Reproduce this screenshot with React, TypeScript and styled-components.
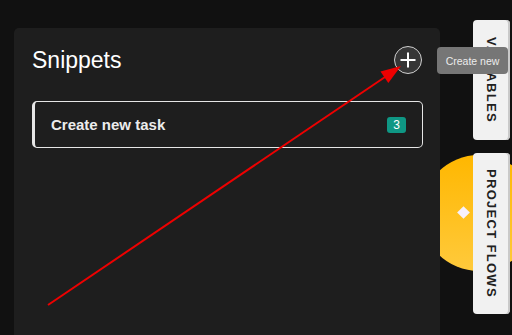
import styled, { createGlobalStyle } from "styled-components"

const GlobalStyle = createGlobalStyle`
  html, body {
    margin: 0;
    padding: 0;
    background: #111111;
    font-family: "Liberation Sans", Arial, sans-serif;
  }
`

const Page = styled.div`
  position: relative;
  width: 512px;
  height: 335px;
  overflow: hidden;
  display: flex;
  align-items: flex-start;
`

const Panel = styled.section`
  position: relative;
  z-index: 2;
  margin: 28px 0 0 14px;
  width: 426px;
  height: 330px;
  box-sizing: border-box;
  padding: 18px 18px 0 18px;
  background: #1e1e1e;
  border-radius: 5px;
  display: flex;
  flex-direction: column;
  gap: 27px;
`

const Header = styled.header`
  display: flex;
  align-items: center;
  justify-content: space-between;
  height: 28px;
`

const Title = styled.h1`
  margin: 0;
  font-size: 23px;
  font-weight: 400;
  color: #ffffff;
`

const AddButton = styled.button`
  width: 28px;
  height: 28px;
  padding: 0;
  border-radius: 50%;
  border: 1px solid #cfcfcf;
  background: #363636;
  display: flex;
  align-items: center;
  justify-content: center;
  cursor: pointer;
`

const SnippetCard = styled.div`
  height: 47px;
  box-sizing: border-box;
  margin-right: -1px;
  padding: 0 16px 0 16px;
  border: 1px solid #e6e6e6;
  border-left: 3px solid #e6e6e6;
  border-radius: 5px;
  display: flex;
  align-items: center;
  justify-content: space-between;
`

const CardLabel = styled.span`
  font-size: 15px;
  font-weight: 700;
  color: #ececec;
`

const Badge = styled.span`
  min-width: 19px;
  height: 16px;
  box-sizing: border-box;
  padding: 0 4px;
  border-radius: 3px;
  background: #0f9784;
  color: #ffffff;
  font-size: 12px;
  line-height: 16px;
  text-align: center;
`

const SideRail = styled.aside`
  position: relative;
  z-index: 2;
  margin: 20px 0 0 33px;
  display: flex;
  flex-direction: column;
  gap: 13px;
`

const Tab = styled.div<{ $h: number }>`
  width: 37px;
  height: ${(p) => p.$h}px;
  box-sizing: border-box;
  background: #f1f1f1;
  border-radius: 4px;
  box-shadow: inset -2px 0 0 #c9c9c9;
  display: flex;
  align-items: center;
  justify-content: center;
  writing-mode: vertical-rl;
  font-size: 13px;
  font-weight: 700;
  letter-spacing: 1.3px;
  color: #202020;
`

// yellow launcher blob, half hidden behind the panel
const Orb = styled.div`
  position: absolute;
  z-index: 1;
  left: 421px;
  top: 155px;
  width: 116px;
  height: 116px;
  border-radius: 50%;
  background: linear-gradient(180deg, #ffb700 0%, #ffca3c 100%);
`

const Diamond = styled.div`
  position: absolute;
  left: 38px;
  top: 53px;
  width: 9px;
  height: 9px;
  background: #f7f0fb;
  transform: rotate(45deg);
`

const Tooltip = styled.div`
  position: absolute;
  z-index: 5;
  left: 437px;
  top: 47px;
  width: 71px;
  height: 27px;
  border-radius: 4px;
  background: #767676;
  color: #ececec;
  font-size: 10.5px;
  display: flex;
  align-items: center;
  justify-content: center;
`

const Annotation = styled.svg`
  position: absolute;
  z-index: 6;
  left: 0;
  top: 0;
  pointer-events: none;
`

export default function App() {
  return (
    <>
      <GlobalStyle />
      <Page>
        <Panel>
          <Header>
            <Title>Snippets</Title>
            <AddButton aria-label="Create new">
              <svg width="18" height="18" viewBox="0 0 18 18">
                <path d="M9 1.5v15M1.5 9h15" stroke="#ffffff" strokeWidth="2" />
              </svg>
            </AddButton>
          </Header>
          <SnippetCard>
            <CardLabel>Create new task</CardLabel>
            <Badge>3</Badge>
          </SnippetCard>
        </Panel>
        <SideRail>
          <Tab $h={120}>VARIABLES</Tab>
          <Tab $h={161}>PROJECT FLOWS</Tab>
        </SideRail>
        <Orb>
          <Diamond />
        </Orb>
        <Tooltip>Create new</Tooltip>
        <Annotation width="512" height="335" viewBox="0 0 512 335">
          <line x1="48" y1="305" x2="388" y2="75" stroke="#ee0000" strokeWidth="2" />
          <polygon points="401,66 380.5,71.4 388.3,83" fill="#ee0000" />
        </Annotation>
      </Page>
    </>
  )
}
